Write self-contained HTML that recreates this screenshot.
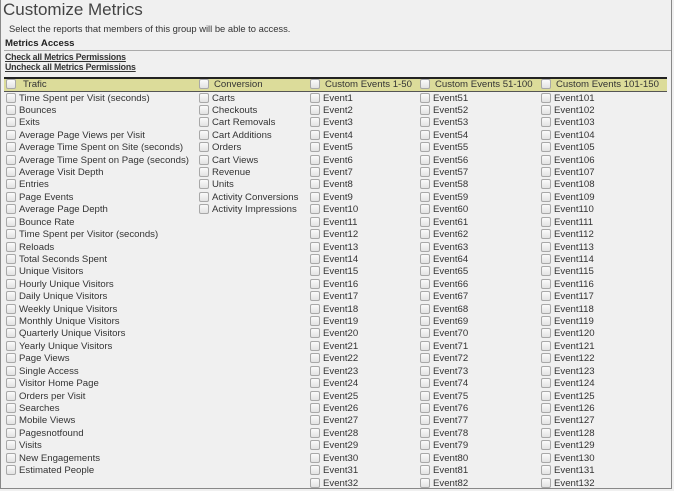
<!DOCTYPE html><html><head><style>
html,body{margin:0;width:674px;height:491px;overflow:hidden}
body{background:#f0f0f0;font-family:"Liberation Sans",Arial,sans-serif;color:#333;position:relative}
.f{position:absolute;left:0;top:0;width:670px;height:488px;border:1px solid #888;border-top:none}
.a{position:absolute;white-space:nowrap;font-size:9.6px;line-height:12px}
.cb{position:absolute;width:8px;height:8px;border:1px solid #a8a8a8;border-radius:2px;background:linear-gradient(#fafafa,#e2e2e2)}
.hd{position:absolute;left:4px;top:77px;width:663px;height:12px;background:#dcdc9a;border-top:2px solid #222;border-bottom:1px solid #555}
</style></head><body>
<div class="f"></div>
<div class="a" style="left:3px;top:1px;font-size:17px;line-height:18px;color:#444">Customize Metrics</div>
<div class="a" style="left:9px;top:23px;font-size:9.4px">Select the reports that members of this group will be able to access.</div>
<div class="a" style="left:5px;top:38px;font-weight:bold;color:#222">Metrics Access</div>
<div style="position:absolute;left:4px;top:50px;width:667px;border-top:1px solid #aaa"></div>
<div class="a" style="left:5px;top:52px;font-size:8.8px;line-height:11px;text-decoration:underline;font-weight:bold;color:#333;letter-spacing:-0.2px">Check all Metrics Permissions</div>
<div class="a" style="left:5px;top:62px;font-size:8.8px;line-height:11px;text-decoration:underline;font-weight:bold;color:#333;letter-spacing:-0.2px">Uncheck all Metrics Permissions</div>
<div class="hd"></div>
<div id="c"></div>
<script>
var cols=[[6,19],[199,212],[310,323],[420,433],[541,554]];
var heads=["Trafic","Conversion","Custom Events 1-50","Custom Events 51-100","Custom Events 101-150"];
var tr=["Time Spent per Visit (seconds)","Bounces","Exits","Average Page Views per Visit","Average Time Spent on Site (seconds)","Average Time Spent on Page (seconds)","Average Visit Depth","Entries","Page Events","Average Page Depth","Bounce Rate","Time Spent per Visitor (seconds)","Reloads","Total Seconds Spent","Unique Visitors","Hourly Unique Visitors","Daily Unique Visitors","Weekly Unique Visitors","Monthly Unique Visitors","Quarterly Unique Visitors","Yearly Unique Visitors","Page Views","Single Access","Visitor Home Page","Orders per Visit","Searches","Mobile Views","Pagesnotfound","Visits","New Engagements","Estimated People"];
var cv=["Carts","Checkouts","Cart Removals","Cart Additions","Orders","Cart Views","Revenue","Units","Activity Conversions","Activity Impressions"];
function ev(s){var r=[];for(var i=0;i<32;i++)r.push("Event"+(s+i));return r;}
var lists=[tr,cv,ev(1),ev(51),ev(101)];
var h="";
for(var c=0;c<5;c++){
 var x=cols[c];
 h+='<div class="cb" style="left:'+x[0]+'px;top:79px"></div><div class="a" style="left:'+(x[1]+(c==0?4:2))+'px;top:79px;color:#333">'+heads[c]+'</div>';
 lists[c].forEach(function(t,i){var y=92.5+i*12.42;
  h+='<div class="cb" style="left:'+x[0]+'px;top:'+Math.round(y)+'px"></div><div class="a" style="left:'+x[1]+'px;top:'+Math.round(y)+'px">'+t+'</div>';});
}
document.getElementById('c').innerHTML=h;
</script>
</body></html>
